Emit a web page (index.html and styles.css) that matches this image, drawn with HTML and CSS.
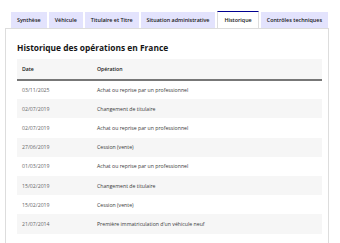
FILE: index.html
```html
<!DOCTYPE html>
<html lang="fr">
<head>
    <meta charset="UTF-8">
    <meta name="viewport" content="width=device-width, initial-scale=1.0">
    <title>Historique</title>
    <link rel="stylesheet" href="styles.css">
</head>
<body>
    <div class="tabs">
        <div class="tab">Synthèse</div>
        <div class="tab">Véhicule</div>
        <div class="tab">Titulaire et Titre</div>
        <div class="tab">Situation administrative</div>
        <div class="tab active">Historique</div>
        <div class="tab">Contrôles techniques</div>
    </div>

    <div class="panel">
        <h2>Historique des opérations en France</h2>
        <table class="history">
            <thead>
                <tr><th>Date</th><th>Opération</th></tr>
            </thead>
            <tbody>
                <tr><td>03/11/2025</td><td>Achat ou reprise par un professionnel</td></tr>
                <tr><td>02/07/2019</td><td>Changement de titulaire</td></tr>
                <tr><td>02/07/2019</td><td>Achat ou reprise par un professionnel</td></tr>
                <tr><td>27/06/2019</td><td>Cession (vente)</td></tr>
                <tr><td>01/03/2019</td><td>Achat ou reprise par un professionnel</td></tr>
                <tr><td>15/02/2019</td><td>Changement de titulaire</td></tr>
                <tr><td>15/02/2019</td><td>Cession (vente)</td></tr>
                <tr><td>21/07/2014</td><td>Première immatriculation d'un véhicule neuf</td></tr>
            </tbody>
        </table>
    </div>
</body>
</html>
```

FILE: styles.css
```css
*{
    margin: 0;
    box-sizing: border-box;
}

body{
    background-color: #ffffff;
    font-family: "Open Sans", sans-serif;
    color: #161616;
}

.tabs{
    display: flex;
    gap: 2px;
    padding: 12px 0 0 11px;
}

.tab{
    height: 16px;
    padding: 0 6px;
    display: flex;
    align-items: center;
    background-color: #e3e3fd;
    font-size: 5.4px;
    font-weight: 600;
    white-space: nowrap;
}

.tab.active{
    background-color: #ffffff;
    border-top: 1px solid #000091;
    border-left: 1px solid #dddddd;
    border-right: 1px solid #dddddd;
    height: 17px;
    margin-top: -1px;
}

.panel{
    margin: 0 11px 0 5px;
    border: 1px solid #dddddd;
    border-bottom: none;
    padding: 12px 6px 20px 11px;
}

.panel h2{
    font-size: 8.4px;
    font-weight: 700;
    line-height: 14px;
    margin-bottom: 4px;
}

.history{
    width: 100%;
    border-collapse: collapse;
    font-size: 5.2px;
}

.history th{
    text-align: left;
    font-weight: 600;
    height: 21px;
    padding: 0 5px;
    background-color: #f6f6f6;
    border-bottom: 2px solid #777777;
}

.history td{
    height: 19.2px;
    padding: 0 5px;
    color: #666666;
}

.history td:last-child{
    color: #3a3a3a;
}

.history th:first-child,
.history td:first-child{
    width: 75px;
}

.history tbody tr:nth-child(even){
    background-color: #f6f6f6;
}
```
